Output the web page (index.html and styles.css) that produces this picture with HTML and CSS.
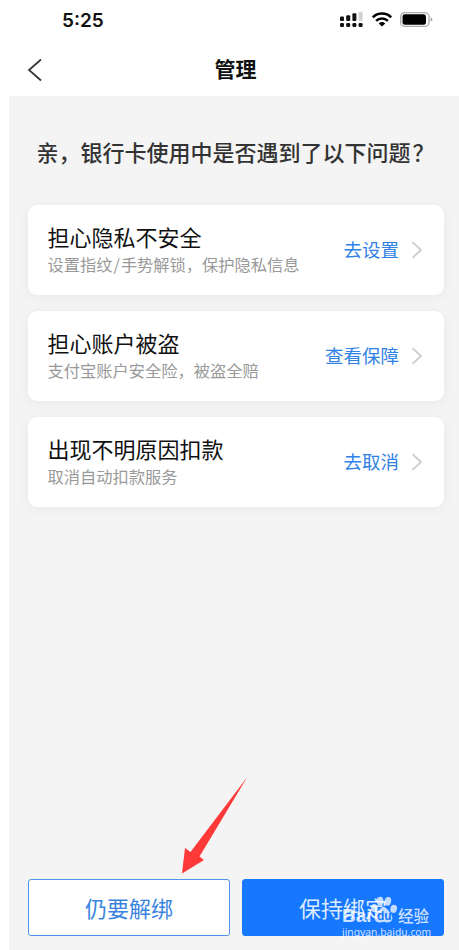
FILE: index.html
```
<!DOCTYPE html>
<html lang="zh-CN">
<head>
  <meta charset="UTF-8">
  <meta name="viewport" content="width=device-width, initial-scale=1.0">
  <title>管理</title>
  <link rel="stylesheet" href="styles.css">
</head>
<body>
  <div class="status-bar">
    <span class="time">5:25</span>
    <svg class="status-icons" width="94" height="18" viewBox="0 0 94 18">
      <g fill="#111">
        <rect x="1" y="5.5" width="4" height="4.5" rx="1"/>
        <rect x="7.2" y="4.3" width="4" height="5.7" rx="1"/>
        <rect x="13.4" y="2.2" width="4" height="7.8" rx="1"/>
        <rect x="1" y="12" width="4" height="4" rx="1.3"/>
        <rect x="7.2" y="12" width="4" height="4" rx="1.3"/>
        <rect x="13.4" y="12" width="4" height="4" rx="1.3"/>
        <rect x="19.6" y="12" width="4" height="4" rx="1.3"/>
      </g>
      <rect x="19.6" y="0.7" width="4" height="9.3" rx="1" fill="#d2d2d2"/>
      <g fill="none" stroke="#000" stroke-width="2.5">
        <path d="M33.8 6.4a13 13 0 0 1 18.4 0"/>
        <path d="M37.1 9.900a8.4 8.4 0 0 1 11.8 0"/>
      </g>
      <path d="M39.8 12.4a4.6 4.6 0 0 1 6.4 0L43 15.600z"/>
      <rect x="61.7" y="1.6" width="28.3" height="13.8" rx="4" fill="#fff" stroke="#aaa" stroke-width="1.3"/>
      <rect x="63.5" y="3.3" width="23.5" height="10.5" rx="2.3"/>
      <path d="M91.5 6.5q2 .5 2 2t-2 2z" fill="#aaa"/>
    </svg>
  </div>

  <header class="nav-bar">
    <svg class="back" width="16" height="24" viewBox="0 0 16 24">
      <path d="M14 1.5L2 12l12 10.5"/>
    </svg>
    <h1>管理</h1>
  </header>

  <main class="content">
    <h2>亲，银行卡使用中是否遇到了以下问题<span class="mark">？</span></h2>

    <section class="card-list">
      <div class="card">
        <div class="card-text">
          <h3>担心隐私不安全</h3>
          <p>设置指纹<span class="slash">/</span>手势解锁，保护隐私信息</p>
        </div>
        <a class="action">去设置</a>
        <svg class="chevron" width="12" height="18" viewBox="0 0 12 18"><path d="M1.5 1.2L10 9l-8.500 7.8"/></svg>
      </div>
      <div class="card">
        <div class="card-text">
          <h3>担心账户被盗</h3>
          <p>支付宝账户安全险，被盗全赔</p>
        </div>
        <a class="action">查看保障</a>
        <svg class="chevron" width="12" height="18" viewBox="0 0 12 18"><path d="M1.5 1.2L10 9l-8.500 7.8"/></svg>
      </div>
      <div class="card">
        <div class="card-text">
          <h3>出现不明原因扣款</h3>
          <p>取消自动扣款服务</p>
        </div>
        <a class="action">去取消</a>
        <svg class="chevron" width="12" height="18" viewBox="0 0 12 18"><path d="M1.5 1.2L10 9l-8.500 7.8"/></svg>
      </div>
    </section>

    <div class="buttons">
      <button class="btn btn-outline">仍要解绑</button>
      <button class="btn btn-primary">保持绑定</button>
    </div>
  </main>

  <!-- arrow pointing at the unbind button -->
  <svg class="arrow" width="68" height="100" viewBox="0 0 68 100">
    <path d="M67.3 2L10.5 77 5 73 2 98.5 24 85 19.500 81.5z" fill="#ff3838"/>
  </svg>

  <div class="watermark">
    <div class="wm-brand">
      <span class="wm-bai">Bai</span>
      <svg class="paw" width="28" height="29" viewBox="0 0 29 29">
        <ellipse cx="4.5" cy="12" rx="3.3" ry="4.2" transform="rotate(-15 4.5 12)"/>
        <ellipse cx="10.5" cy="4.8" rx="3.4" ry="4.5"/>
        <ellipse cx="18.5" cy="5" rx="3.4" ry="4.5" transform="rotate(12 18.5 5)"/>
        <ellipse cx="24.5" cy="12.8" rx="3.4" ry="4.2" transform="rotate(15 24.5 12.8)"/>
        <path d="M14 11c3 0 4.500 3.500 7 6 3 3 3 8-.5 9.500-2.500 1-4-.2-6.500-.2s-4 1.200-6.500.2C4 25 4 20 7 17c2.500-2.500 4-6 7-6z"/>
      </svg>
      <span class="wm-du">du</span>
      <span class="wm-jy">经验</span>
    </div>
    <div class="wm-url">jingyan.baidu.com</div>
  </div>
</body>
</html>
```
FILE: styles.css
```
* {
  box-sizing: border-box;
}
body {
  margin: 0;
  height: 950px;
  display: flex;
  flex-direction: column;
  position: relative;
  overflow: hidden;
  background: #fff;
  font-family: "Noto Sans CJK SC", sans-serif;
}
h1, h2, h3, p {
  margin: 0;
}

/* top of the screen */
.status-bar {
  height: 40px;
  padding: 0 26px 0 62px;
  display: flex;
  align-items: center;
  justify-content: space-between;
}
.time {
  font-family: Inter, sans-serif;
  font-size: 19px;
  font-weight: 600;
  color: #111;
}
.nav-bar {
  height: 56px;
  padding: 0 27px;
  display: grid;
  grid-template-columns: 16px 1fr 4px;
  align-items: center;
}
.nav-bar h1 {
  font-size: 21px;
  line-height: 30px;
  font-weight: 700;
  text-align: center;
  color: #111;
}
.back {
  margin-top: 3px;
  fill: none;
  stroke: #333;
  stroke-width: 1.7;
}

.content {
  flex: 1;
  margin-left: 9px;
  padding: 39px 15px 14px 19px;
  display: flex;
  flex-direction: column;
  background: #f4f4f4;
}
.content h2 {
  margin-left: 8.5px;
  font-size: 22px;
  line-height: 32px;
  font-weight: 500;
  color: #333;
  white-space: nowrap;
}
.mark {
  margin-left: 2px;
}
.card-list {
  margin-top: 38px;
  display: flex;
  flex-direction: column;
  gap: 16px;
}
.card {
  height: 90px;
  padding: 0 21px 2px 19.5px;
  display: flex;
  align-items: center;
  background: #fff;
  border-radius: 9px;
  box-shadow: 0 2px 12px rgba(0, 0, 0, 0.05);
}
.card-text {
  flex: 1;
}
.card h3 {
  font-size: 22px;
  line-height: 29px;
  font-weight: 400;
  color: #111;
}
.card p {
  padding-top: 1px;
  font-size: 16.25px;
  line-height: 24px;
  color: #999;
}
.slash {
  margin: 0 1px;
}
.action {
  font-size: 18.5px;
  line-height: 28px;
  color: #2f82e6;
}
.chevron {
  margin-left: 12px;
  margin-top: 2px;
  fill: none;
  stroke: #ccc;
  stroke-width: 1.8;
}

.buttons {
  margin-top: auto;
  display: flex;
  gap: 12px;
}
.btn {
  flex: 1;
  height: 57px;
  padding: 0 0 2px;
  border: 1.5px solid #4f94e8;
  border-radius: 3px;
  font-family: inherit;
  font-size: 22px;
}
.btn-outline {
  background: #fff;
  color: #3a84e0;
}
.btn-primary {
  background: #1677ff;
  border-color: #1677ff;
  color: #dcebff;
}

/* drawn over the page */
.arrow {
  position: absolute;
  left: 180px;
  top: 775px;
}
.watermark {
  position: absolute;
  left: 342px;
  top: 896px;
  color: rgba(255, 255, 255, 0.8);
}
.wm-brand {
  height: 29px;
  display: flex;
  align-items: flex-end;
  font-family: "Liberation Sans", sans-serif;
  font-weight: 700;
}
.wm-bai {
  width: 28px;
  font-size: 19px;
  line-height: 18px;
}
.paw {
  fill: rgba(255, 255, 255, 0.75);
}
.wm-du {
  width: 0;
  margin-left: -21px;
  margin-right: 21px;
  font-size: 12px;
  line-height: 17px;
  color: #1677ff;
}
.wm-jy {
  font-family: "Noto Sans CJK SC", sans-serif;
  font-size: 15.5px;
  line-height: 19px;
  font-weight: 500;
}
.wm-url {
  font-family: "Noto Sans", sans-serif;
  font-size: 10.3px;
  line-height: 14px;
}
```
